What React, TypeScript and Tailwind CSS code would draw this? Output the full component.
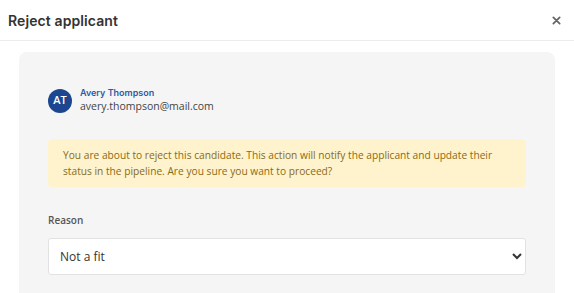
import React from 'react';

const App: React.FC = () => {
  return (
    <div className="w-[574px] h-[293px] bg-white overflow-hidden font-['Open_Sans',sans-serif]">
      {/* Header */}
      <div className="h-[41px] flex items-center justify-between pl-2 pr-[10px] border-b border-[#ececec]">
        <h2 className="text-[14px] font-semibold text-[#333] font-['Inter',sans-serif] tracking-[0.1px]">Reject applicant</h2>
        <button className="w-4 h-4 flex items-center justify-center text-[#666]">
          <svg width="9" height="9" viewBox="0 0 10 10" fill="none" stroke="currentColor" strokeWidth="2" strokeLinecap="round">
            <path d="M1.5 1.5l7 7M8.5 1.5l-7 7" />
          </svg>
        </button>
      </div>

      {/* Body */}
      <div className="pt-[11px] px-[19px]">
        <div className="bg-[#f5f5f5] rounded-lg px-[29px] pt-[35px] pb-10">
          <div className="flex items-center gap-2">
            <div className="w-6 h-6 rounded-full bg-[#1d4690] flex items-center justify-center text-white text-[11px] font-semibold">
              AT
            </div>
            <div className="flex flex-col">
              <span className="text-[9px] leading-[12px] font-semibold text-[#2f5aa6] font-['Inter',sans-serif]">Avery Thompson</span>
              <span className="text-[10.5px] leading-[15px] text-[#444]">avery.thompson@mail.com</span>
            </div>
          </div>

          <div className="mt-[25px] bg-[#fff3cd] rounded-[4px] px-[15px] py-[8px] text-[10.2px] leading-[16px] text-[#8a6a14]">
            You are about to reject this candidate. This action will notify the applicant and update their status in the pipeline. Are you sure you want to proceed?
          </div>

          <div className="mt-[26px]">
            <label className="block text-[10px] leading-[14px] font-semibold text-[#555]">Reason</label>
            <select className="mt-[11px] w-full h-[37px] bg-white border border-[#e2e2e2] rounded-[3px] pl-[7px] pr-[4px] text-[12px] text-[#333] outline-none">
              <option>Not a fit</option>
              <option>Position filled</option>
              <option>Insufficient experience</option>
            </select>
          </div>
        </div>
      </div>
    </div>
  );
};

export default App;
